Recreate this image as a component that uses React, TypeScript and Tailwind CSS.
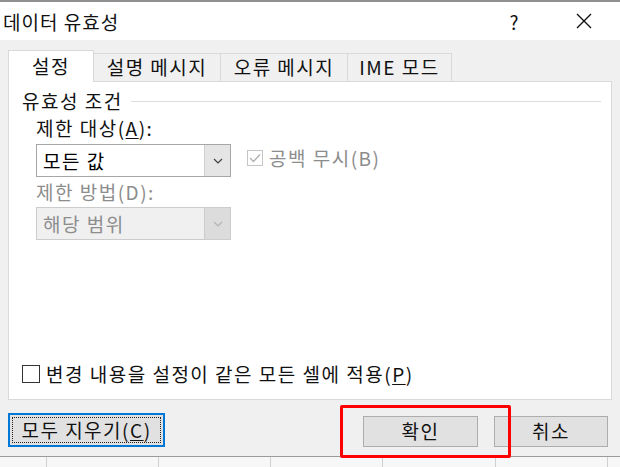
import React from 'react';

const font = { fontFamily: '"Noto Sans CJK KR", "Noto Sans", sans-serif' };

const Chevron = ({ color }: { color: string }) => (
  <svg width="10" height="6" viewBox="0 0 10 6" fill="none">
    <path d="M1 1 L5 5 L9 1" stroke={color} strokeWidth="1.2" />
  </svg>
);

const Combo = ({ value, disabled }: { value: string; disabled?: boolean }) => (
  <div
    className={`flex h-[33px] w-[195px] border ${
      disabled ? 'border-[#cccccc] bg-[#f0f0f0] text-[#8d8d8d]' : 'border-[#a6a6a6] bg-white text-black'
    }`}
  >
    <div className="flex flex-1 items-center pl-[6px] leading-none">{value}</div>
    <div
      className={`flex w-[26px] items-center justify-center border-l ${
        disabled ? 'border-[#cccccc] bg-[#dcdcdc]' : 'border-[#cfcfcf] bg-[#e5e5e5]'
      }`}
    >
      <Chevron color={disabled ? '#b5b5b5' : '#404040'} />
    </div>
  </div>
);

const tabs = [
  { label: '설명 메시지', w: 'w-[127px]' },
  { label: '오류 메시지', w: 'w-[127px]' },
  { label: 'IME 모드', w: 'w-[104px]' },
];

export default function App() {
  return (
    <div
      style={font}
      className="relative flex h-[467px] w-[620px] flex-col overflow-hidden bg-[#f0f0f0] text-[19px] tracking-[1.5px] text-[#111]"
    >
      {/* sheet behind, top edge */}
      <div className="h-[2px] bg-[#8f8f8f]" />

      {/* Title bar */}
      <div className="flex h-[38px] items-center bg-white pl-[3px]">
        <span className="leading-none tracking-[1px]">데이터 유효성</span>
        <span className="ml-auto mr-[56px] leading-none">?</span>
        <svg width="16" height="16" viewBox="0 0 16 16" className="mr-[28px]">
          <path d="M1 1 L15 15 M15 1 L1 15" stroke="#111" strokeWidth="1.4" />
        </svg>
      </div>

      {/* Body */}
      <div className="flex flex-1 flex-col px-[8px] pt-[10px]">
        <div className="flex items-end">
          <div className="relative z-10 -mb-px flex h-[32px] w-[86px] items-center justify-center border border-b-0 border-[#d9d9d9] bg-white">
            설정
          </div>
          {tabs.map((t) => (
            <div
              key={t.label}
              className={`flex h-[28px] ${t.w} items-center justify-center border border-b-0 border-l-0 border-[#d9d9d9]`}
            >
              {t.label}
            </div>
          ))}
        </div>

        <div className="flex h-[319px] flex-col border border-[#d9d9d9] bg-white pl-[13px] pr-[10px]">
          <div className="mt-[7px] flex items-center">
            <span className="leading-[24px]">유효성 조건</span>
            <div className="ml-[8px] h-px flex-1 bg-[#dcdcdc]" />
          </div>

          <div className="flex pl-[14px]">
            <div className="flex flex-col">
              <div className="mt-[3px] leading-[24px]">
                제한 대상(<span className="underline underline-offset-2">A</span>):
              </div>
              <div className="mt-[4px]">
                <Combo value="모든 값" />
              </div>
              <div className="mt-[3px] leading-[24px] text-[#8d8d8d]">제한 방법(D):</div>
              <div className="mt-[3px]">
                <Combo value="해당 범위" disabled />
              </div>
            </div>

            <div className="ml-[16px] mt-[33px] flex h-[24px] items-center text-[#8d8d8d]">
              <div className="mr-[6px] flex h-[16px] w-[16px] items-center justify-center border border-[#c6c6c6]">
                <svg width="12" height="10" viewBox="0 0 12 10" fill="none">
                  <path d="M1 5 L4.5 8.5 L11 1.5" stroke="#b0b0b0" strokeWidth="1.3" />
                </svg>
              </div>
              공백 무시(B)
            </div>
          </div>

          <div className="mb-[11px] mt-auto flex items-center">
            <div className="mr-[6px] h-[18px] w-[18px] border border-[#333]" />
            변경 내용을 설정이 같은 모든 셀에 적용(<span className="underline underline-offset-2">P</span>)
          </div>
        </div>

        {/* Buttons */}
        <div className="mt-[13px] flex items-start">
          <button className="flex h-[34px] w-[157px] items-center justify-center border-2 border-[#0078d7] bg-[#e1e1e1] p-[2px]">
            <span className="flex h-full w-full items-center justify-center border border-dotted border-[#222]">
              모두 지우기(<span className="underline underline-offset-2">C</span>)
            </span>
          </button>
          <button className="ml-auto mt-[3px] h-[31px] w-[115px] border border-[#adadad] bg-[#e1e1e1]">확인</button>
          <button className="ml-[16px] mr-[4px] mt-[3px] h-[31px] w-[114px] border border-[#adadad] bg-[#e1e1e1]">취소</button>
        </div>
      </div>

      {/* sheet behind, bottom edge */}
      <div className="h-[11px] border-t border-[#9a9a9a] bg-[#f7f7f7]">
        <div className="grid h-full grid-cols-[47px_112px_112px_112px_113px_112px_1fr]">
          <div className="border-r border-[#d0d0d0]" />
          <div className="border-r border-[#d0d0d0]" />
          <div className="border-r border-[#d0d0d0]" />
          <div className="border-r border-[#d0d0d0]" />
          <div className="border-r border-[#d0d0d0]" />
          <div className="border-r border-[#d0d0d0]" />
          <div />
        </div>
      </div>

      {/* red annotation box */}
      <div className="pointer-events-none absolute left-[340px] top-[405px] h-[53px] w-[171px] rounded-[2px] border-[3px] border-[#ff0000]" />
    </div>
  );
}
